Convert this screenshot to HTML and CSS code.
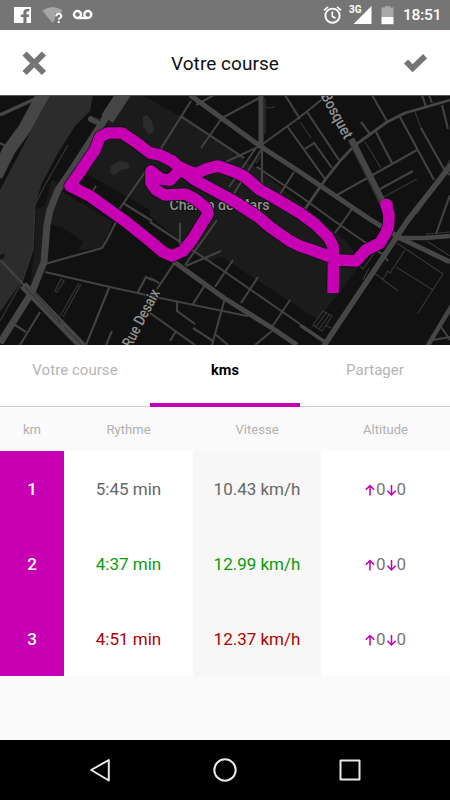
FILE: index.html
```html
<!DOCTYPE html>
<html lang="fr">
<head>
<meta charset="utf-8">
<title>Votre course</title>
<link rel="stylesheet" href="styles.css">
</head>
<body>
<div class="screen">
  <div class="status">
    <svg class="status-left" viewBox="0 0 100 30" width="100" height="30">
      <path fill="#fff" d="M14 7h17v16h-4.500v-6h2.300l.4-2.600h-2.700v-1.700c0-.8.4-1.200 1.300-1.200h1.500V9.100h-2.400c-2.200 0-3.500 1.200-3.500 3.400v1.900h-2.600V17h2.600v6H14z"/>
      <path fill="#a5a5a5" d="M42.300 10.500Q52.500 3.500 62.700 10.500L60.500 13 55 13.500 55 19.500 52.500 23z"/>
      <path fill="none" stroke="#fff" stroke-width="1.900" d="M56.300 16.300a2.500 2.300 0 1 1 4 1.500q-1.600 1.100-1.600 2M58.700 21v1.900"/>
      <path fill="none" stroke="#fff" stroke-width="2.400" d="M77.700 18h10"/>
      <circle cx="77.500" cy="14.500" r="3.500" fill="none" stroke="#fff" stroke-width="2.400"/>
      <circle cx="87.800" cy="14.500" r="3.500" fill="none" stroke="#fff" stroke-width="2.400"/>
    </svg>
    <div class="status-right">
      <svg viewBox="320 0 30 30" width="30" height="30">
        <circle cx="332.500" cy="15.700" r="7.100" fill="none" stroke="#fff" stroke-width="1.900"/>
        <path fill="none" stroke="#fff" stroke-width="1.700" d="M324 10.300l4-3.500M341 10.300l-4-3.500M332.300 11.500v4.800l3.200 2"/>
      </svg>
      <span class="net">3G</span>
      <svg viewBox="352 0 50 30" width="50" height="30">
        <path fill="#fff" d="M353.500 24L371.500 6v18z"/>
        <path fill="#a8a8a8" d="M381.500 7.500h3.500V6h5v1.500h3.500V17h-12z"/>
        <path fill="#fff" d="M381.500 17h12v7.200h-12z"/>
      </svg>
      <span class="clock">18:51</span>
    </div>
  </div>

  <header class="bar">
    <svg viewBox="20 50 30 27" width="30" height="27"><path fill="none" stroke="#757575" stroke-width="6" d="M24.600 53.500l19.300 19.500M43.900 53.500l-19.300 19.500"/></svg>
    <h1>Votre course</h1>
    <svg viewBox="400 50 30 27" width="30" height="27"><path fill="none" stroke="#757575" stroke-width="5.800" d="M406 61.500l6.700 6.700 12.400-12"/></svg>
  </header>

  <svg class="map" viewBox="0 95 450 250" width="450" height="250">
    <rect y="95" width="450" height="250" fill="#111"/>
    <!-- river and parks -->
    <path fill="#2c2c2c" d="M50 95H93L90 111 75 126 58 153 42 183 35 205 33 250 22 281 0 312V190z"/>
    <path fill="#1b1b1b" d="M112 112L125 95H142L180 116 262 172 345 240 362 262 318 320 222 257 205 262 150 216 75 170z"/>
    <path fill="#111" d="M81 170L150 210 150 224 70 187z"/>
    <path fill="#1b1b1b" d="M48 220L60 190 113 222 102 247 78 251 83 242 62 227 52 225zM45 205L52 180 60 184 48 220 44 262 30 285 34 255 36 210z"/>
    <path fill="#2b2b2b" d="M111 166l8-5 8 1 3 4-3 3-6 1-6 5-5-2zM143 117l4-2 5 6 2 10-5 4-6-9z"/>
    <path fill="#151515" d="M0 255l5-2-1 5-4 2z"/>

    <!-- narrow outlines -->
    <g fill="none" stroke="#353535" stroke-width="1.200">
      <path d="M68 145L45 185 35 205 33 250 22 282 0 321"/>
      <path d="M265 98V134M265 107l4 1 6-1M417 214L450 160M300 122l11 16M365 142l16 26M380 199l37-20M415 112l6 16"/>
      <path d="M397 243l46 31-25 39M405 250l-15 23-2-2-5 8M396 267l37 23M373 272l25 19M427 240v-6l23-2M427 241l23 15"/>
      <path d="M359 265l11-16 5 3-12 17zM363 280l6-12M313 325l10-14 9 5-10 15zM316 327l10-14M319 329l10-14M325 325l6 3"/>
      <path d="M61 279l3 2-7 11-2-1zM79 283l-19 33M81 284l-18 33"/>
      <path d="M256 163l4-6M256 167l5 3"/>
    </g>
    <!-- streets -->
    <g fill="none" stroke="#424242" stroke-width="2.100">
      <path d="M0 143l9 5M0 260l25 26M191 101l-31 49M182 117l62 41M222 118l-21 30M196 105l18-10M222 118l39-21M260 146l40-29 25-20M285 95l15 24"/>
      <path d="M287 126l38 53M305 149l9-6 18 25M307 112l32 48M262 146v42M260 146l-45 21M256 148l-27 39M261 150l-28 45M294 172l-14 22M257 167l43 29 33 24 49 34"/>
      <path d="M372 95l15 26M422 95l4 12M429 95l3 8M442 105l6 24M400 117l34 63M421 128l23 41 6 6M361 122l9 12M376 132l16 31M337 195l80-45M380 189l33-18M352 209l-17 24M450 195l-14 39"/>
      <path d="M150 222l68 45 82 57M217 220l-32 45M221 251l-35 15M180 223v35M233 260l-18 27M258 277l-17 26M290 300l-18 27M205 285l-12 19"/>
      <path d="M45 272l65 15 50 11 87 18 3-2M175 262l-18 27M150 278l9 5M177 302v9l18 13M225 298l-13 47M193 328l20 13M215 334l13 11M272 331l-17 14M150 313l45 32M176 331l-6 10"/>
      <path d="M45 264l57-16 5-8 10-20M109 288l-23 57M40 312l-20 33M15 325l11 7M112 331l-6 14M138 292l8-15 6 3M150 165l-32 46M123 203l29 18M96 186l-5 8M70 187l20 13 60 42M382 253l6 8"/>
      <path d="M433 340l17-3M441 327l9 13"/>
    </g>
    <!-- main roads -->
    <g fill="none" stroke="#464646" stroke-width="5" stroke-linejoin="round">
      <path d="M190 95L260 146 300 172 368 218 400 238 450 262M261 95V146" stroke-width="5"/>
      <path d="M173 261L224 298 272 328 297 345" stroke-width="5"/>
      <path d="M298 219L325 180 340 161 354 146 387 122 405 113 450 100" stroke-width="2.800"/>
      <path d="M455 160L408 220 323 347" stroke-width="5.500"/>
      <path d="M397 238L425 238 450 236M454 302L427 347" stroke-width="4.500"/>
      <path d="M300 325l25 17M0 115l35-16" stroke-width="3.500"/>
      <path d="M351 139L383 203" stroke-width="7"/>
      <path d="M45 91L25 128 9 150-4 176" stroke-width="13"/>
      <path d="M126 90L107 119" stroke-width="14"/>
      <path d="M106 117L75 165 58 190 50 210 47 225 44 262 32 292 0 343" stroke-width="7"/>
      <path d="M91 119l11 5" stroke-width="6" stroke-linecap="round"/>
      <path d="M23 285L83 347" stroke-width="8.500"/>
    </g>
    <path fill="none" stroke="#2b2b2b" d="M349 142l32 62M25 287l35 37M34 292l27 30M64 327l18 18M92 117l9 4"/>

    <g class="map-label">
      <text x="169.500" y="210" textLength="100" lengthAdjust="spacingAndGlyphs">Champ de Mars</text>
      <text transform="translate(131 348.500) rotate(-62.500)" textLength="63" lengthAdjust="spacingAndGlyphs">Rue Desaix</text>
      <text transform="translate(320.500 96) rotate(61.500)" textLength="50" lengthAdjust="spacingAndGlyphs">Bosquet</text>
    </g>

    <g fill="none" stroke-linejoin="round">
      <path class="route-edge" d="M333 293L333.500 258 333 246 328 237 315 224 300 213 273 197 260 190 245 177 235 172 218 166 206 169 195 174 182 168 170 179 161 178 151 171 151 183 156 190 165 195 185 194 195 199 206 208 208 214 203 222 192 240 183 251 172 256 163 252 150 241 125 221 108 209 90 196 70 186 80 172 88 160 95 150 100 137 108 133 122 133 137 143 150 153 160 155 172 161 186 173 195 180 232 200 257 216 270 227 290 241 300 246 312 250 333 258 338 260 356 261 366 250 380 243 386 233 388.500 226 389 215 386 204"/>
      <path class="route" d="M333 293L333.500 258 333 246 328 237 315 224 300 213 273 197 260 190 245 177 235 172 218 166 206 169 195 174 182 168 170 180 161 179 151 171 151 183 156 190 165 195 185 194 195 199 206 208 208 214 203 222 192 240 183 251 172 256 163 252 150 241 125 221 108 209 90 196 70 186 80 172 88 160 95 150 100 137 108 133 122 133 137 143 150 153 160 155 172 161 186 173 195 180 232 200 257 216 270 227 290 241 300 246 312 250 333 258 338 260 356 261 366 250 380 243 386 233 388.500 226 389 215 386 204"/>
      <circle cx="386.500" cy="205" r="6.300" fill="#c800b4"/>
    </g>
    <path stroke="#555" d="M0 95.500H450"/>
  </svg>

  <nav class="tabs">
    <span>Votre course</span>
    <span class="active">kms</span>
    <span>Partager</span>
  </nav>

  <div class="grid heads"><span>km</span><span>Rythme</span><span>Vitesse</span><span>Altitude</span></div>
  <div class="grid row">
    <span class="km">1</span><span>5:45 min</span><span class="speed">10.43 km/h</span>
    <span class="alt"><svg viewBox="0 0 11 12" width="11" height="12"><path d="M5 11.500V2M.8 5.800L5 1.600l4.200 4.200"/></svg>0<svg viewBox="0 0 11 12" width="11" height="12"><path d="M5.500 1v9.500M1.300 6.700l4.200 4.200 4.200-4.200"/></svg>0</span>
  </div>
  <div class="grid row faster">
    <span class="km">2</span><span>4:37 min</span><span class="speed">12.99 km/h</span>
    <span class="alt"><svg viewBox="0 0 11 12" width="11" height="12"><path d="M5 11.500V2M.8 5.800L5 1.600l4.200 4.200"/></svg>0<svg viewBox="0 0 11 12" width="11" height="12"><path d="M5.500 1v9.500M1.300 6.700l4.200 4.200 4.200-4.200"/></svg>0</span>
  </div>
  <div class="grid row slower">
    <span class="km">3</span><span>4:51 min</span><span class="speed">12.37 km/h</span>
    <span class="alt"><svg viewBox="0 0 11 12" width="11" height="12"><path d="M5 11.500V2M.8 5.800L5 1.600l4.200 4.200"/></svg>0<svg viewBox="0 0 11 12" width="11" height="12"><path d="M5.500 1v9.500M1.300 6.700l4.200 4.200 4.200-4.200"/></svg>0</span>
  </div>

  <footer class="keys">
    <svg viewBox="0 0 30 30" width="30" height="30"><path d="M6.200 15L23.800 5v20.500z"/></svg>
    <svg viewBox="0 0 30 30" width="30" height="30"><circle cx="15" cy="15" r="10.700"/></svg>
    <svg viewBox="0 0 30 30" width="30" height="30"><rect x="5.500" y="5.500" width="19" height="19"/></svg>
  </footer>
</div>
</body>
</html>
```
FILE: styles.css
```css
* { box-sizing: border-box; }
body { margin: 0; font-family: Roboto, "Liberation Sans", sans-serif; }
svg { display: block; flex: none; }

.screen { width: 450px; height: 800px; display: flex; flex-direction: column; background: #fafafa; overflow: hidden; }

.status { height: 30px; flex: none; display: flex; justify-content: space-between; background: #757575; color: #fff; }
.status-right { display: flex; width: 130px; }
.net { width: 2px; margin-left: -1px; margin-right: 1px; padding-top: 4px; font-size: 10px; line-height: 12px; font-weight: 700; }
.clock { padding-left: 1px; font-size: 15.5px; line-height: 31px; font-weight: 500; letter-spacing: -0.2px; }

.bar { height: 65px; flex: none; display: flex; align-items: center; justify-content: space-between; padding: 2px 20px 0; background: #fff; }
.bar h1 { margin: 0; font-size: 19px; font-weight: 400; letter-spacing: 0.05px; color: #111; }

.map { height: 250px; }
.map-label { font: 500 15.5px Roboto, sans-serif; fill: #929292; stroke: #111; stroke-width: 2px; paint-order: stroke; }
.route-edge { stroke: #08100a; stroke-width: 13px; }
.route { stroke: #c800b4; stroke-width: 11.6px; }

.tabs { height: 62px; flex: none; display: grid; grid-template-columns: repeat(3, 1fr); background: #fff; }
.tabs span { height: 62px; padding-bottom: 11px; border-bottom: 1px solid #d0d0d0; line-height: 51px; text-align: center; font-size: 15px; letter-spacing: 0.05px; color: #b5b5b5; }
.tabs .active { border-bottom: 4px solid #c800b4; font-size: 14.5px; font-weight: 700; color: #000; letter-spacing: 0; }

.grid { flex: none; display: grid; grid-template-columns: 64px 129px 128px 129px; text-align: center; }
.heads { height: 44px; line-height: 45px; font-size: 13px; letter-spacing: 0.05px; color: #b0b0b0; }
.row { height: 75px; grid-template-rows: 75px; line-height: 77px; background: #fff; font-size: 17px; color: #666; }
.km { background: #c800b4; color: #fff; font-weight: 500; }
.speed { background: #f7f7f7; }
.faster { color: #0a9d0a; }
.slower { color: #b00000; }
.alt { display: flex; align-items: center; justify-content: center; padding-top: 2px; line-height: 73px; color: #777; }
.alt svg { fill: none; stroke: #c800b4; stroke-width: 1.5px; margin-top: 1px; }

.keys { height: 60px; flex: none; margin-top: auto; display: flex; align-items: center; justify-content: space-between; padding: 0 85px; background: #000; }
.keys svg { fill: none; stroke: #e8e8e8; stroke-width: 2px; stroke-linejoin: round; }
```
